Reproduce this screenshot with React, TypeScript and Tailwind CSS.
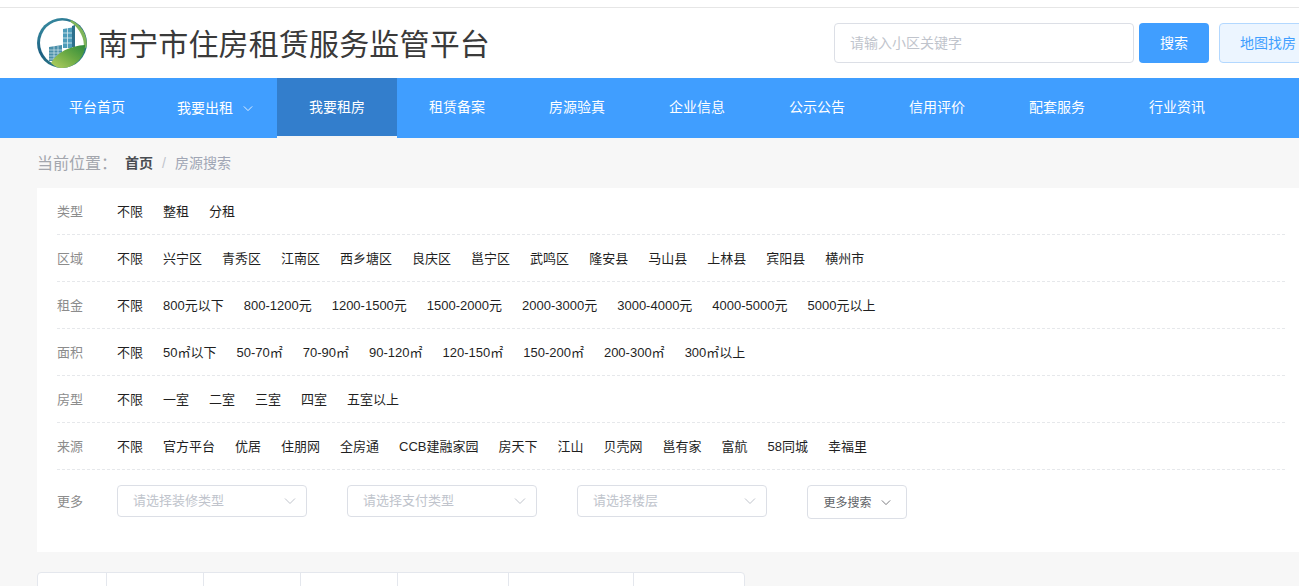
import React from "react";

const cjk = "font-['Liberation_Sans','Noto_Sans_CJK_SC',sans-serif]";

const nav = ["平台首页", "我要出租", "我要租房", "租赁备案", "房源验真", "企业信息", "公示公告", "信用评价", "配套服务", "行业资讯"];

const rows: [string, string[]][] = [
  ["类型", ["不限", "整租", "分租"]],
  ["区域", ["不限", "兴宁区", "青秀区", "江南区", "西乡塘区", "良庆区", "邕宁区", "武鸣区", "隆安县", "马山县", "上林县", "宾阳县", "横州市"]],
  ["租金", ["不限", "800元以下", "800-1200元", "1200-1500元", "1500-2000元", "2000-3000元", "3000-4000元", "4000-5000元", "5000元以上"]],
  ["面积", ["不限", "50㎡以下", "50-70㎡", "70-90㎡", "90-120㎡", "120-150㎡", "150-200㎡", "200-300㎡", "300㎡以上"]],
  ["房型", ["不限", "一室", "二室", "三室", "四室", "五室以上"]],
  ["来源", ["不限", "官方平台", "优居", "住朋网", "全房通", "CCB建融家园", "房天下", "江山", "贝壳网", "邕有家", "富航", "58同城", "幸福里"]],
];

const tabWidths = [69, 97, 97, 97, 111, 125, 110];

function Chevron({ className }: { className: string }) {
  return (
    <svg viewBox="0 0 12 8" fill="none" className={className}>
      <path d="M1 1.5 6 6.5 11 1.5" stroke="currentColor" strokeWidth="1" />
    </svg>
  );
}

function Logo() {
  return (
    <svg viewBox="0 0 50 50" className="w-[50px] h-[50px] shrink-0">
      <defs>
        <linearGradient id="ring" x1="0" y1="0" x2="0.6" y2="1">
          <stop offset="0" stopColor="#3f97a8" />
          <stop offset="0.55" stopColor="#1c5f82" />
          <stop offset="1" stopColor="#2f7f86" />
        </linearGradient>
        <linearGradient id="leaf" x1="0" y1="1" x2="1" y2="0">
          <stop offset="0" stopColor="#b5d060" />
          <stop offset="0.55" stopColor="#68a843" />
          <stop offset="1" stopColor="#2e8a3c" />
        </linearGradient>
      </defs>
      <circle cx="25" cy="25" r="25" fill="url(#ring)" />
      <circle cx="25.500" cy="25" r="22.500" fill="#fff" />
      <path d="M34 2C41 5 47.500 12 49 20 50 24 50 27 49 30L46.800 29C47.500 22 44 11 33 3.500Z" fill="#7fb55a" />
      <path d="M12 29l13-2v16H12z" fill="#4a8faa" />
      <path d="M12 32h13M12 35h13M12 38h13M12 41h13M17 28v15M21 28v15" stroke="#d5e8ee" strokeWidth="0.7" />
      <path d="M26 11l9-1.500V30H26z" fill="#4d9cba" />
      <path d="M26 15h9M26 20h9M26 25h9M30.500 10v20" stroke="#dcecf0" strokeWidth="0.8" />
      <path d="M35 8l3-1v22h-3z" fill="#2c6f8c" />
      <path d="M14 45C20 34 33 28 48 27 48.500 37 39 50 25 50 21 50 17 48 14 45Z" fill="url(#leaf)" />
    </svg>
  );
}

function Select({ text }: { text: string }) {
  return (
    <div className="w-[190px] h-[32px] shrink-0 border border-[#dcdfe6] rounded-[4px] bg-white flex items-center justify-between pl-[15px] pr-[10px]">
      <span className="text-[13px] text-[#c0c4cc]">{text}</span>
      <Chevron className="w-[12px] h-[8px] text-[#c0c4cc]" />
    </div>
  );
}

export default function App() {
  return (
    <div className={`w-[1299px] h-[586px] overflow-hidden bg-[#f7f7f7] ${cjk}`}>
      <div className="h-[8px] bg-white border-b border-[#e6e6e6]" />
      <header className="h-[70px] bg-white flex items-center pl-[37px]">
        <Logo />
        <h1 className="ml-[11px] mt-[3px] w-[390px] shrink-0 text-[30px] tracking-[0.15px] leading-none font-normal text-[#3a3a3a] whitespace-nowrap">南宁市住房租赁服务监管平台</h1>
        <div className="ml-[346px] w-[300px] h-[40px] shrink-0 border border-[#dcdfe6] rounded-[4px] flex items-center pl-[15px] text-[14px] text-[#c0c4cc]">请输入小区关键字</div>
        <div className="ml-[5px] w-[70px] h-[40px] shrink-0 rounded-[4px] bg-[#409eff] text-white text-[14px] flex items-center justify-center">搜索</div>
        <div className="ml-[10px] w-[98px] h-[40px] shrink-0 rounded-[4px] bg-[#ecf5ff] border border-[#b3d8ff] text-[#409eff] text-[14px] flex items-center justify-center">地图找房</div>
      </header>
      <nav className="h-[60px] bg-[#409eff] flex pl-[37px]">
        {nav.map((item, i) => (
          <div
            key={item}
            className={
              i === 2
                ? "w-[120px] h-[60px] shrink-0 flex items-center justify-center text-white text-[14px] bg-[#337ecc] border-b-2 border-[#f5f5f5]"
                : i === 1
                  ? "w-[120px] h-[60px] shrink-0 flex items-center justify-center text-white text-[14px]"
                  : "w-[120px] h-[60px] shrink-0 flex items-center justify-center text-white text-[14px] pb-[2px]"
            }
          >
            {item}
            {i === 1 && <Chevron className="ml-[10px] mr-[4px] w-[10px] h-[7px]" />}
          </div>
        ))}
      </nav>
      <div className="h-[50px] pl-[37px] flex items-center">
        <span className="w-[88px] shrink-0 mt-[2px] text-[16px] text-[#a3a6ad]">当前位置：</span>
        <span className="text-[14px] font-bold text-[#4a4d52]">首页</span>
        <span className="mx-[9px] text-[14px] text-[#c0c4cc]">/</span>
        <span className="text-[14px] text-[#a0a6b5]">房源搜索</span>
      </div>
      <section className="ml-[37px] h-[364px] bg-white pl-[20px] pr-[14px]">
        {rows.map(([label, items]) => (
          <div key={label} className="h-[47px] pt-[2px] border-b border-dashed border-[#e6e8eb] flex items-center text-[13px]">
            <span className="w-[60px] shrink-0 text-[#8c8c8c]">{label}</span>
            <div className="flex gap-[20px] text-[#1f1f1f] whitespace-nowrap">
              {items.map((t) => (
                <span key={t}>{t}</span>
              ))}
            </div>
          </div>
        ))}
        <div className="flex items-start pt-[15px]">
          <span className="w-[60px] shrink-0 text-[13px] text-[#8c8c8c] leading-[34px]">更多</span>
          <div className="flex gap-[40px]">
            <Select text="请选择装修类型" />
            <Select text="请选择支付类型" />
            <Select text="请选择楼层" />
            <div className="w-[100px] h-[34px] shrink-0 pt-[1px] border border-[#dcdfe6] rounded-[4px] flex items-center justify-center text-[12px] text-[#606266]">
              更多搜索
              <Chevron className="ml-[9px] mb-[1px] w-[10px] h-[7px]" />
            </div>
          </div>
        </div>
      </section>
      <div className="ml-[37px] mt-[20px] flex w-[708px] h-[30px] bg-white border border-[#e4e7ed] rounded-t-[4px]">
        {tabWidths.map((w, i) => (
          <div key={i} style={{ width: w }} className="h-full shrink-0 border-r border-[#e4e7ed] last:border-r-0" />
        ))}
      </div>
    </div>
  );
}
